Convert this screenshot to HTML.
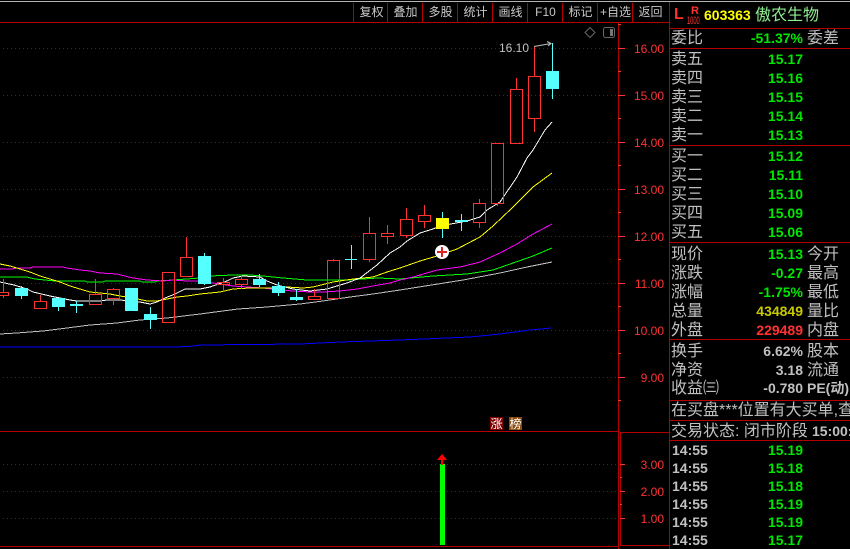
<!DOCTYPE html>
<html><head><meta charset="utf-8">
<style>
html,body{margin:0;padding:0;background:#000;}
#p{position:relative;width:850px;height:549px;overflow:hidden;background:#000;font-family:"Liberation Sans","WenQuanYi Zen Hei","Noto Sans CJK SC",sans-serif;}
svg{position:absolute;left:0;top:0;}
.t{position:absolute;white-space:nowrap;height:18px;line-height:18px;}
.l{left:671px;font-size:16px;color:#c0c0c0;margin-top:1px;}
.m{left:807px;font-size:16px;color:#c0c0c0;margin-top:1px;}
.v{right:47px;font-size:14px;font-weight:bold;color:#00e600;}
.g{color:#c0c0c0;}
.b{position:absolute;top:3px;height:19px;line-height:19px;width:35px;text-align:center;font-size:12px;color:#c8c8c8;white-space:nowrap;}
.a{position:absolute;left:634px;width:30px;text-align:right;height:14px;line-height:14px;font-size:12px;color:#ff3232;margin-top:1px;}
.e{position:absolute;left:672px;font-size:14px;font-weight:bold;color:#c0c0c0;height:18px;line-height:18px;}
</style></head><body><div id="p">
<svg width="850" height="549" viewBox="0 0 850 549" shape-rendering="crispEdges">
<rect x="0" y="1" width="850" height="1" fill="#b4b4b4"/>
<g fill="none" stroke="#a00000" stroke-width="1" stroke-dasharray="1 3">
<path d="M3 48.5H618M3 95.5H618M3 142.5H618M3 189.5H618M3 236.5H618M3 283.5H618M3 330.5H618M3 377.5H618M3 464.5H618M3 491.5H618M3 518.5H618"/>
</g>
<g fill="none" stroke="#b40000" stroke-width="1">
<path d="M0 22.5H669M353.5 3V22M387.5 3V22M422.5 3V22M457.5 3V22M492.5 3V22M527.5 3V22M562.5 3V22M597.5 3V22M632.5 3V22"/>
<path d="M618.5 22V549M669.5 2V549M620.5 433V545M0 431.5H618M620 432.5H669M0 546.5H618M620 545.5H669"/>
<path d="M670 28.5H850M670 48.5H850M670 145.5H850M670 242.5H850M670 339.5H850M670 400.5H850M670 420.5H850M670 440.5H850"/>
</g>
<g fill="none" stroke="#ff3232" stroke-width="1">
<path d="M618 48.5H625M618 95.5H625M618 142.5H625M618 189.5H625M618 236.5H625M618 283.5H625M618 330.5H625M618 377.5H625M618 24.5H621M618 71.5H621M618 118.5H621M618 165.5H621M618 212.5H621M618 259.5H621M618 306.5H621M618 353.5H621M618 400.5H621"/>
<path d="M620 464.5H625M620 491.5H625M620 518.5H625M620 477.5H622M620 504.5H622"/>
</g>
<!-- moving averages -->
<g fill="none" stroke-width="1">
<polyline stroke="#0000ff" points="0,347 177,347 195,346 200,345 300,344 340,342 400,340 470,337 500,334 530,330 551,328"/>
<polyline stroke="#c0c0c0" points="0,334 17,333 43,331 67,328 90,325 117,323 140,320 167,318 200,314 238,309 267,307 300,304 323,301 350,297 373,294 400,290 463,280 500,273 527,267 552,262"/>
<polyline stroke="#00ff00" points="0,277 27,277 35,279 45,280 55,281 85,281 87,282 103,282 105,281 140,281 142,282 155,282 157,281 173,280 200,278 210,276 233,275 250,275 263,276 283,278 307,280 347,280 378,278 400,279 433,276 467,274 493,270 513,263 533,256 552,248"/>
<polyline stroke="#ff00ff" points="0,269 12,269 17,268 30,268 33,267 63,267 67,268 80,270 90,271 100,273 117,274 133,278 147,280 163,281 173,280 187,281 200,281 213,283 233,286 247,287 263,288 280,290 293,291 310,292 323,292 340,291 357,289 373,286 390,283 400,280 413,277 437,270 460,267 480,262 500,253 517,244 533,234 552,224"/>
<polyline stroke="#ffff00" points="0,264 10,266 20,269 30,272 40,276 50,279 60,282 70,286 80,289 90,292 100,293 110,294 120,296 133,298 147,301 157,301 167,299 177,297 187,296 200,294 220,292 233,289 250,288 267,288 287,287 303,288 313,287 333,282 353,279 373,277 387,272 400,268 420,261 437,256 457,249 480,237 493,226 512,208 533,187 552,173"/>
<polyline stroke="#ffffff" points="0,282 14,285 27,289 33,292 50,296 65,299 70,300 77,301 100,301 107,300 120,300 130,301 140,302 150,304 157,302 165,298 175,294 185,289 200,289 210,287 227,281 233,278 243,276 260,277 267,281 277,285 293,289 310,291 327,289 347,283 360,278 377,265 390,253 400,247 407,241 420,233 433,229 440,226 467,221 480,217 487,210 500,202 517,177 527,158 533,150 545,130 552,122"/>
</g>
<!-- red candles -->
<g fill="none" stroke="#ff3232" stroke-width="1">
<rect x="-2.5" y="292.5" width="11" height="3"/><path d="M3.5 279V292M3.5 296V298"/>
<rect x="34.5" y="301.5" width="12" height="7"/><path d="M40.5 295V301"/>
<rect x="89.5" y="294.5" width="12" height="10"/><path d="M95.5 279V294"/>
<rect x="107.5" y="289.5" width="12" height="9"/><path d="M113.5 288V289M113.5 299V305"/>
<rect x="162.5" y="272.5" width="12" height="50"/>
<rect x="180.5" y="257.5" width="12" height="19"/><path d="M186.5 237V257"/>
<rect x="217.5" y="282.5" width="12" height="2"/><path d="M223.5 278V282M223.5 285V292"/>
<rect x="235.5" y="279.5" width="12" height="5"/><path d="M241.5 275V279M241.5 285V289"/>
<rect x="308.5" y="296.5" width="12" height="3"/><path d="M314.5 289V296"/>
<rect x="327.5" y="260.5" width="12" height="38"/><path d="M333.5 259V260"/>
<rect x="363.5" y="233.5" width="12" height="26"/><path d="M369.5 217V233M369.5 260V262"/>
<rect x="381.5" y="233.5" width="12" height="3"/><path d="M387.5 225V233M387.5 237V244"/>
<rect x="400.5" y="219.5" width="12" height="16"/><path d="M406.5 208V219M406.5 236V238"/>
<rect x="418.5" y="215.5" width="12" height="6"/><path d="M424.5 205V215M424.5 222V228"/>
<rect x="473.5" y="203.5" width="12" height="19"/><path d="M479.5 199V203M479.5 223V228"/>
<rect x="491.5" y="143.5" width="12" height="60"/><path d="M497.5 204V206"/>
<rect x="510.5" y="89.5" width="12" height="54"/><path d="M516.5 78V89"/>
<rect x="528.5" y="76.5" width="12" height="42"/><path d="M534.5 47V76M534.5 119V132"/>
</g>
<!-- cyan candles -->
<g fill="#54ffff">
<rect x="15" y="288" width="13" height="8"/><rect x="21" y="286" width="1" height="13"/>
<rect x="52" y="298" width="13" height="9"/><rect x="58" y="298" width="1" height="13"/>
<rect x="70" y="304" width="13" height="2"/><rect x="76" y="301" width="1" height="12"/>
<rect x="125" y="288" width="13" height="23"/>
<rect x="144" y="314" width="13" height="6"/><rect x="150" y="307" width="1" height="22"/>
<rect x="198" y="256" width="13" height="28"/><rect x="204" y="253" width="1" height="32"/>
<rect x="253" y="279" width="13" height="6"/><rect x="259" y="274" width="1" height="13"/>
<rect x="272" y="286" width="13" height="7"/><rect x="278" y="282" width="1" height="14"/>
<rect x="290" y="297" width="13" height="3"/><rect x="296" y="289" width="1" height="12"/>
<rect x="345" y="259" width="12" height="1"/><rect x="351" y="245" width="1" height="24"/>
<rect x="442" y="212" width="1" height="26"/>
<rect x="455" y="220" width="13" height="2"/><rect x="461" y="214" width="1" height="17"/>
<rect x="546" y="71" width="13" height="18"/><rect x="552" y="43" width="1" height="56"/>
</g>
<rect x="436" y="218" width="13" height="11" fill="#ffff00"/>
<!-- marker -->
<g shape-rendering="auto">
<circle cx="442" cy="252" r="7" fill="#fff"/>
<path d="M437 252H447M442 247V257" stroke="#e02020" stroke-width="2" fill="none"/>
<!-- top annotation arrow -->
<path d="M534 46.5L551 43.5M547 41.5L551 43.5L548 46" stroke="#c0c0c0" stroke-width="1" fill="none"/>
<path d="M590 27.5L595 32.5L590 37.5L585 32.5Z" stroke="#666" stroke-width="1" fill="none"/>
<rect x="603.5" y="27.5" width="11" height="10" rx="2" stroke="#666" fill="none"/>
</g>
<rect x="610" y="29" width="3" height="7" fill="#777"/>
<!-- volume bar -->
<rect x="440" y="464" width="5" height="81" fill="#00ff00"/>
<path d="M442 454L447 460H443V465H441V460H437Z" fill="#ff0000" shape-rendering="auto"/>
<rect x="490" y="417" width="13" height="13" fill="#800000"/>
<rect x="509" y="417" width="13" height="13" fill="#8b4a10"/>
</svg>

<div class="b" style="left:354px">复权</div>
<div class="b" style="left:388px">叠加</div>
<div class="b" style="left:423px">多股</div>
<div class="b" style="left:458px">统计</div>
<div class="b" style="left:493px">画线</div>
<div class="b" style="left:528px">F10</div>
<div class="b" style="left:563px">标记</div>
<div class="b" style="left:598px">+自选</div>
<div class="b" style="left:633px">返回</div>

<div class="t" style="left:499px;top:39px;font-size:12px;color:#c0c0c0">16.10</div>
<div class="a" style="top:41px">16.00</div>
<div class="a" style="top:88px">15.00</div>
<div class="a" style="top:135px">14.00</div>
<div class="a" style="top:182px">13.00</div>
<div class="a" style="top:229px">12.00</div>
<div class="a" style="top:276px">11.00</div>
<div class="a" style="top:323px">10.00</div>
<div class="a" style="top:370px">9.00</div>
<div class="a" style="top:457px">3.00</div>
<div class="a" style="top:484px">2.00</div>
<div class="a" style="top:511px">1.00</div>

<div class="t" style="left:490px;top:415px;width:13px;text-align:center;font-size:12px;color:#fff">涨</div>
<div class="t" style="left:509px;top:415px;width:13px;text-align:center;font-size:12px;color:#fff">榜</div>

<div class="t" style="left:674px;top:6px;font-size:16px;font-weight:bold;color:#ff3232">L</div>
<div class="t" style="left:691px;top:2px;font-size:11px;font-weight:bold;color:#ff3232">R</div>
<div class="t" style="left:687px;top:12px;font-size:11px;color:#ff3232;transform:scaleX(.52);transform-origin:left">1000</div>
<div class="t" style="left:704px;top:6px;font-size:14px;font-weight:bold;color:#ffff00">603363</div>
<div class="t" style="left:755px;top:7px;font-size:16px;color:#90ee90">傲农生物</div>

<div class="t l" style="top:29px">委比</div><div class="t v" style="top:29px">-51.37%</div><div class="t m" style="top:29px">委差</div>
<div class="t l" style="top:50px">卖五</div><div class="t v" style="top:50px">15.17</div>
<div class="t l" style="top:69px">卖四</div><div class="t v" style="top:69px">15.16</div>
<div class="t l" style="top:88px">卖三</div><div class="t v" style="top:88px">15.15</div>
<div class="t l" style="top:107px">卖二</div><div class="t v" style="top:107px">15.14</div>
<div class="t l" style="top:126px">卖一</div><div class="t v" style="top:126px">15.13</div>
<div class="t l" style="top:147px">买一</div><div class="t v" style="top:147px">15.12</div>
<div class="t l" style="top:166px">买二</div><div class="t v" style="top:166px">15.11</div>
<div class="t l" style="top:185px">买三</div><div class="t v" style="top:185px">15.10</div>
<div class="t l" style="top:204px">买四</div><div class="t v" style="top:204px">15.09</div>
<div class="t l" style="top:223px">买五</div><div class="t v" style="top:223px">15.06</div>
<div class="t l" style="top:245px">现价</div><div class="t v" style="top:245px">15.13</div><div class="t m" style="top:245px">今开</div>
<div class="t l" style="top:264px">涨跌</div><div class="t v" style="top:264px">-0.27</div><div class="t m" style="top:264px">最高</div>
<div class="t l" style="top:283px">涨幅</div><div class="t v" style="top:283px">-1.75%</div><div class="t m" style="top:283px">最低</div>
<div class="t l" style="top:302px">总量</div><div class="t v" style="top:302px;color:#c8c800">434849</div><div class="t m" style="top:302px">量比</div>
<div class="t l" style="top:321px">外盘</div><div class="t v" style="top:321px;color:#ff3232">229489</div><div class="t m" style="top:321px">内盘</div>
<div class="t l" style="top:342px">换手</div><div class="t v g" style="top:342px">6.62%</div><div class="t m" style="top:342px">股本</div>
<div class="t l" style="top:361px">净资</div><div class="t v g" style="top:361px">3.18</div><div class="t m" style="top:361px">流通</div>
<div class="t l" style="top:379px">收益㈢</div><div class="t v g" style="top:379px">-0.780</div><div class="t m" style="top:378px;font-size:14px;font-weight:bold">PE(动)</div>
<div class="t l" style="top:401px">在买盘***位置有大买单,查</div>
<div class="t l" style="top:422px">交易状态: 闭市阶段</div>
<div class="t" style="left:812px;top:422px;font-size:14px;font-weight:bold;color:#c0c0c0">15:00:</div>

<div class="e" style="top:441px">14:55</div><div class="t v" style="top:441px">15.19</div>
<div class="e" style="top:459px">14:55</div><div class="t v" style="top:459px">15.18</div>
<div class="e" style="top:477px">14:55</div><div class="t v" style="top:477px">15.18</div>
<div class="e" style="top:495px">14:55</div><div class="t v" style="top:495px">15.19</div>
<div class="e" style="top:513px">14:55</div><div class="t v" style="top:513px">15.19</div>
<div class="e" style="top:531px">14:55</div><div class="t v" style="top:531px">15.17</div>
</div></body></html>
